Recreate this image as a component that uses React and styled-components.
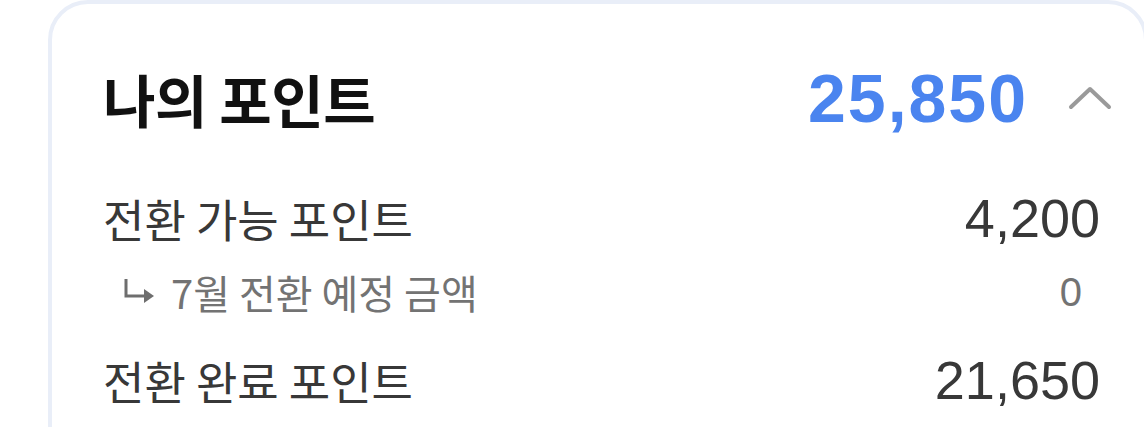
import React from 'react';
import styled, { createGlobalStyle } from 'styled-components';

const GlobalStyle = createGlobalStyle`
  html, body {
    margin: 0;
    padding: 0;
    background: #ffffff;
    overflow: hidden;
  }
`;

const Page = styled.div`
  height: 427px;
  padding-left: 48px;
  box-sizing: border-box;
`;

const Card = styled.section`
  width: 1100px;
  min-height: 480px;
  box-sizing: border-box;
  border: 4px solid #e9eef8;
  border-radius: 40px;
  background: #fff;
  padding: 0 32px 0 51px;
  font-family: "Noto Sans CJK KR", "Noto Sans", sans-serif;
`;

const Header = styled.div`
  display: flex;
  align-items: center;
  height: 188px;
`;

const Title = styled.h2`
  margin: 0;
  flex: 1;
  font-size: 57px;
  font-weight: 700;
  color: #111;
  letter-spacing: -0.5px;
`;

const Total = styled.span`
  font-family: "Liberation Sans", Arial, sans-serif;
  font-size: 68px;
  font-weight: 700;
  color: #4a84ef;
  letter-spacing: 2px;
`;

const Toggle = styled.button`
  display: flex;
  align-items: center;
  margin-left: 40px;
  padding: 0;
  border: 0;
  background: none;
  cursor: pointer;
`;

const Row = styled.div`
  display: flex;
  align-items: center;
  justify-content: space-between;
  margin-right: ${p => (p.$sub ? 30 : 12)}px;
  margin-top: ${p => p.$gap || 0}px;
  height: ${p => (p.$sub ? 44 : 52)}px;
  padding-left: ${p => (p.$sub ? 20 : 0)}px;
  color: ${p => (p.$sub ? '#737373' : '#383838')};
`;

const Label = styled.span`
  display: flex;
  align-items: center;
  gap: 14px;
  font-size: ${p => (p.$sub ? 40 : 45)}px;
  font-weight: 400;
`;

const Amount = styled.span`
  font-family: "Liberation Sans", Arial, sans-serif;
  font-size: ${p => (p.$sub ? 40 : 54)}px;
`;

const Chevron = () => (
  <svg width="44" height="24" viewBox="0 0 44 24" fill="none">
    <path d="M3 21 L22 3 L41 21" stroke="#9a9a9a" strokeWidth="4" strokeLinecap="round" strokeLinejoin="round" />
  </svg>
);

// bent "carried over" arrow in front of the sub row
const SubArrow = () => (
  <svg width="34" height="28" viewBox="0 0 34 28" fill="none">
    <path d="M3 1 V18 H28" stroke="#6e6e6e" strokeWidth="3" />
    <path d="M21 11 L31 18 L21 25 Z" fill="#6e6e6e" />
  </svg>
);

const rows = [
  { label: '전환 가능 포인트', value: '4,200' },
  { label: '7월 전환 예정 금액', value: '0', sub: true, gap: 26 },
  { label: '전환 완료 포인트', value: '21,650', gap: 40 },
];

export default function App() {
  return (
    <>
      <GlobalStyle />
      <Page>
        <Card>
          <Header>
            <Title>나의 포인트</Title>
            <Total>25,850</Total>
            <Toggle aria-label="접기">
              <Chevron />
            </Toggle>
          </Header>
          {rows.map(r => (
            <Row key={r.label} $sub={r.sub} $gap={r.gap}>
              <Label $sub={r.sub}>
                {r.sub && <SubArrow />}
                {r.label}
              </Label>
              <Amount $sub={r.sub}>{r.value}</Amount>
            </Row>
          ))}
        </Card>
      </Page>
    </>
  );
}
